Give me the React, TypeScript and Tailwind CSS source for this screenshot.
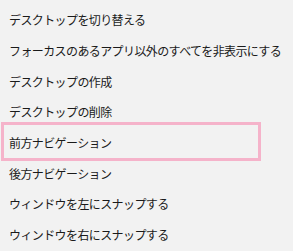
const items = [
  "デスクトップを切り替える",
  "フォーカスのあるアプリ以外のすべてを非表示にする",
  "デスクトップの作成",
  "デスクトップの削除",
  "前方ナビゲーション",
  "後方ナビゲーション",
  "ウィンドウを左にスナップする",
  "ウィンドウを右にスナップする",
];

export default function App() {
  return (
    <div
      className="flex h-[251px] w-[293px] flex-col bg-[#f2f2f2] pt-[5px] text-[#1a1a1a]"
      style={{ fontFamily: '"Noto Sans CJK JP", "Noto Sans", sans-serif' }}
    >
      {items.map((label, i) => (
        <div
          key={label}
          className="relative flex h-[30.7px] items-center pl-[9px] text-[12px] tracking-[-0.6px]"
        >
          {i === 4 && (
            <span className="pointer-events-none absolute left-[1px] top-[-6px] h-[39px] w-[260px] border-[3px] border-[#f5b3ca]" />
          )}
          <span>{label}</span>
        </div>
      ))}
    </div>
  );
}
